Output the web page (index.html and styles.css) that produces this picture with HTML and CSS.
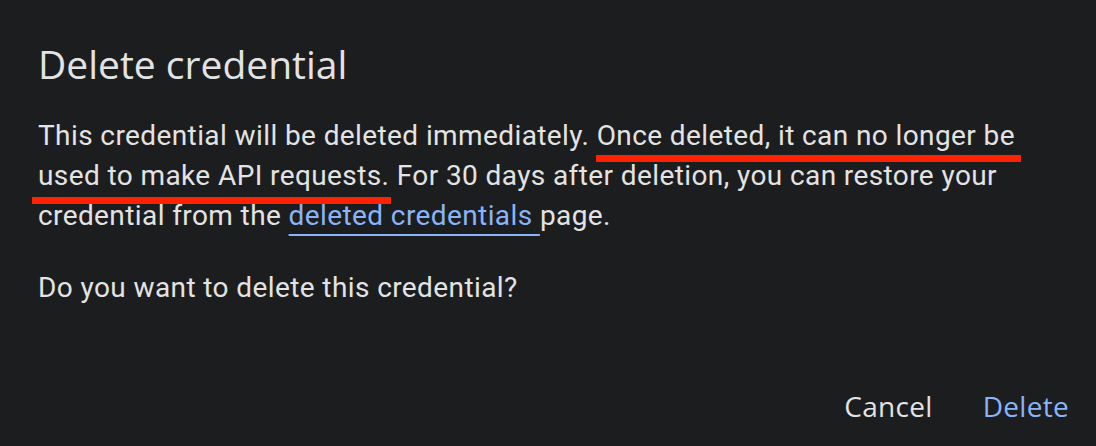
FILE: index.html
```html
<!DOCTYPE html>
<html lang="en">
<head>
    <meta charset="UTF-8">
    <title>Delete credential</title>
    <link rel="stylesheet" href="styles.css">
</head>
<body>
    <div class="dialog">
        <h2 class="dialog-title">Delete credential</h2>
        <div class="dialog-content">
            <p>This credential will be deleted immediately. <span class="mark mark-1">Once deleted, it can no longer be</span> <span class="mark mark-2">used to make API requests</span>. For 30 days after deletion, you can restore your credential from the <a href="#" class="link">deleted credentials </a>page.</p>
            <p>Do you want to delete this credential?</p>
        </div>
        <div class="dialog-actions">
            <button class="btn btn-cancel">Cancel</button>
            <button class="btn btn-delete">Delete</button>
        </div>
    </div>
</body>
</html>
```

FILE: styles.css
```css
html, body {
    margin: 0;
    padding: 0;
    height: 100%;
    background: #1c1d1f;
}

.dialog {
    height: 446px;
    box-sizing: border-box;
    padding: 38px 27px 0 38px;
    display: flex;
    flex-direction: column;
    color: #e3e3e3;
}

.dialog-title {
    margin: 0;
    font-family: 'Open Sans', sans-serif;
    font-weight: 400;
    font-size: 39px;
    line-height: 52px;
    letter-spacing: 0;
}

.dialog-content {
    margin-top: 26px;
    font-family: 'Roboto', sans-serif;
    font-size: 28px;
    line-height: 40px;
    letter-spacing: 0.4px;
}

.dialog-content p {
    margin: 0 0 32px;
}

/* red annotation underlines */
.mark {
    position: relative;
    display: inline-block;
}

.mark::after {
    content: '';
    position: absolute;
    height: 7px;
    background: #ff2200;
}

.mark-1::after {
    left: -1px;
    right: -6px;
    bottom: -6px;
}

.mark-2::after {
    left: -6px;
    right: -9px;
    bottom: -8px;
}

.link {
    color: #8ab4f8;
    text-decoration: underline;
    text-decoration-thickness: 2px;
    text-underline-offset: 9px;
}

.dialog-actions {
    margin-top: auto;
    display: flex;
    justify-content: flex-end;
    gap: 50px;
    padding-bottom: 24px;
}

.btn {
    background: none;
    border: none;
    padding: 0;
    font-family: 'Open Sans', sans-serif;
    font-size: 28px;
    font-weight: 500;
    line-height: 32px;
    letter-spacing: 0.3px;
    cursor: pointer;
}

.btn-cancel {
    color: #e3e3e3;
}

.btn-delete {
    color: #8ab4f8;
}
```
